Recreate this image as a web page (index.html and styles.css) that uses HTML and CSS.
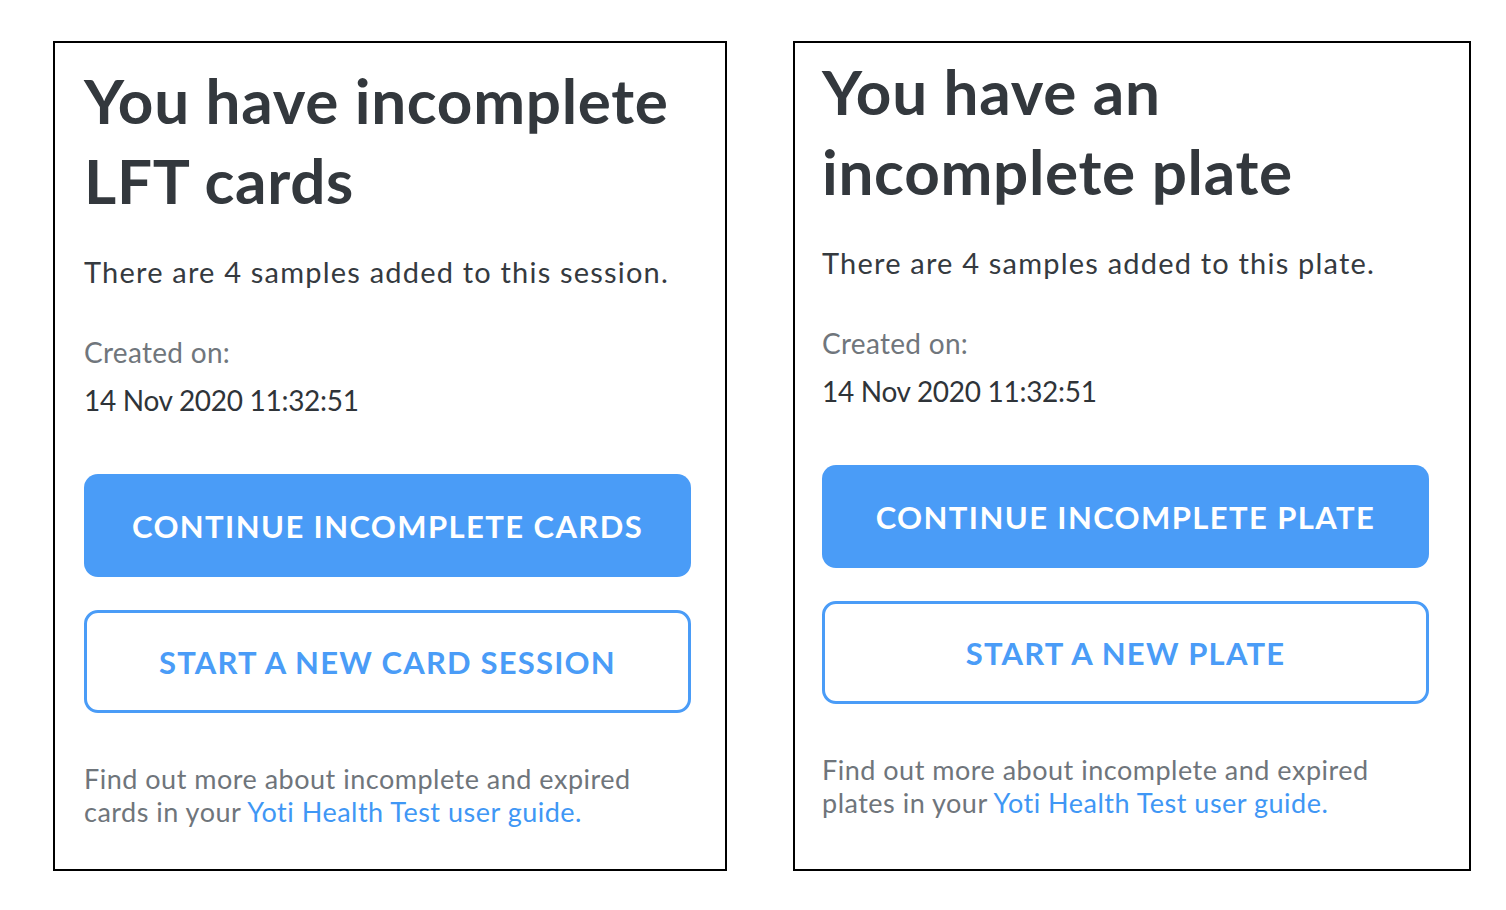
FILE: index.html
```html
<!DOCTYPE html>
<html>
<head>
<meta charset="utf-8">
<link rel="stylesheet" href="styles.css">
</head>
<body>
<div class="row">
  <section class="panel panel-left">
    <h1 class="title">You have incomplete LFT cards</h1>
    <p class="lead">There are 4 samples added to this session.</p>
    <div class="created">
      <div class="label">Created on:</div>
      <div class="date">14 Nov 2020 11:32:51</div>
    </div>
    <button class="btn btn-primary">CONTINUE INCOMPLETE CARDS</button>
    <button class="btn btn-outline">START A NEW CARD SESSION</button>
    <p class="foot">Find out more about incomplete and expired cards in your <a class="link">Yoti Health Test user guide.</a></p>
  </section>
  <section class="panel panel-right">
    <h1 class="title">You have an incomplete plate</h1>
    <p class="lead">There are 4 samples added to this plate.</p>
    <div class="created">
      <div class="label">Created on:</div>
      <div class="date">14 Nov 2020 11:32:51</div>
    </div>
    <button class="btn btn-primary">CONTINUE INCOMPLETE PLATE</button>
    <button class="btn btn-outline">START A NEW PLATE</button>
    <p class="foot">Find out more about incomplete and expired plates in your <a class="link">Yoti Health Test user guide.</a></p>
  </section>
</div>
</body>
</html>
```
FILE: styles.css
```css
html, body {
  margin: 0;
  padding: 0;
  background: #ffffff;
}
body {
  font-family: "Lato", "Noto Sans", sans-serif;
  color: #353a3f;
}
.row {
  display: flex;
  gap: 66px;
  padding: 41px 0 0 53px;
}
.panel {
  box-sizing: border-box;
  height: 830px;
  border: 2px solid #000;
  display: flex;
  flex-direction: column;
}
.panel-left {
  width: 674px;
  padding: 17px 0 0 29px;
}
.panel-right {
  width: 678px;
  padding: 8px 0 0 27px;
}
.title {
  margin: 0;
  width: 630px;
  font-size: 62px;
  line-height: 80px;
  font-weight: 700;
  color: #33383d;
  letter-spacing: 0.7px;
}
.lead {
  margin: 32px 0 0;
  font-size: 29px;
  line-height: 40px;
  letter-spacing: 1.2px;
  color: #353a3f;
}
.created {
  margin-top: 36px;
  font-size: 28px;
  line-height: 48px;
}
.label {
  color: #70767c;
  letter-spacing: 0.3px;
}
.date {
  color: #2f3439;
  letter-spacing: -0.3px;
}
.btn {
  box-sizing: border-box;
  width: 607px;
  height: 103px;
  border-radius: 14px;
  font-family: "Lato", "Noto Sans", sans-serif;
  font-weight: 700;
  font-size: 31px;
  letter-spacing: 1.4px;
  cursor: pointer;
}
.btn-primary {
  margin-top: 50px;
  background: #4a9cf7;
  border: none;
  color: #ffffff;
}
.btn-outline {
  margin-top: 33px;
  background: #ffffff;
  border: 3px solid #4a9cf7;
  color: #4a9cf7;
  letter-spacing: 1.2px;
}
.foot {
  margin: 49px 0 0;
  width: 580px;
  font-size: 27px;
  line-height: 33px;
  letter-spacing: 0.5px;
  color: #6f757b;
}
.link {
  color: #3f97f5;
}
```
